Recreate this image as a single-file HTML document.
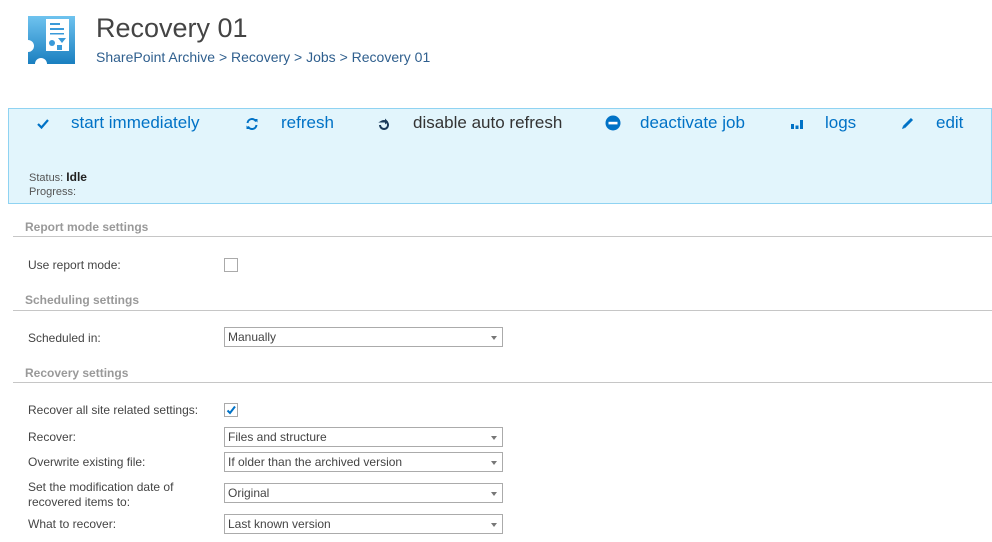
<!DOCTYPE html><html><head><style>
body{margin:0;width:992px;height:542px;background:#fff;font-family:"Liberation Sans",sans-serif;position:relative;overflow:hidden}
.a{position:absolute;white-space:nowrap}
.t{color:#0072c6;font-size:17px;line-height:20px}
.h{color:#999;font-size:12px;font-weight:bold;left:25px;line-height:14px}
.l{height:1px;background:#c6c6c6;left:13px;right:0}
.lb{color:#444;font-size:12px;left:28px;line-height:15px}
.s{left:224px;width:277px;height:18px;border:1px solid #ababab;font-size:12px;color:#444;line-height:18px;text-indent:3px}
.s:after{content:"";position:absolute;right:5px;top:8px;border-left:3.5px solid transparent;border-right:3.5px solid transparent;border-top:4px solid #777}
</style></head><body>
<svg class="a" style="left:26px;top:15px" width="50" height="50" viewBox="0 0 50 50">
<defs><linearGradient id="g" x1="0" y1="0" x2="0" y2="1"><stop offset="0" stop-color="#6fc3ef"/><stop offset="1" stop-color="#1a7fc0"/></linearGradient></defs>
<path d="M2 1H49V49H21A6 6 0 0 0 9 49H2V37A6 6 0 0 0 2 25Z" fill="url(#g)"/>
<rect x="20" y="4" width="23" height="32" fill="#fff"/>
<rect x="24" y="8" width="10" height="2" fill="#3a9ad9"/><rect x="24" y="13" width="14" height="2" fill="#3a9ad9"/><rect x="24" y="18" width="14" height="1.5" fill="#3a9ad9"/>
<circle cx="26" cy="28" r="3" fill="#3a9ad9"/><path d="M32 23H40L36 28Z" fill="#3a9ad9"/><rect x="31" y="30" width="5" height="5" fill="#3a9ad9"/>
</svg>
<div class="a" style="left:96px;top:12px;font-size:27px;color:#444;line-height:32px">Recovery 01</div>
<div class="a" style="left:96px;top:48px;font-size:14px;color:#2f5f8e;line-height:18px">SharePoint Archive &gt; Recovery &gt; Jobs &gt; Recovery 01</div>
<div class="a" style="left:8px;top:108px;width:982px;height:94px;background:#e2f5fc;border:1px solid #8fd3f2"></div>
<svg class="a" style="left:36px;top:117px" width="14" height="14" viewBox="0 0 14 14"><path d="M2 7L5.5 10.5L12 3" stroke="#0072c6" stroke-width="2.2" fill="none"/></svg>
<div class="a t" style="left:71px;top:113px">start immediately</div>
<svg class="a" style="left:245px;top:117px" width="14" height="14" viewBox="0 0 14 14"><path d="M2.5 6A4.5 4.5 0 0 1 11 4.5M11.5 8A4.5 4.5 0 0 1 3 9.5" stroke="#0072c6" stroke-width="2" fill="none"/><path d="M9 2H12.5V5.5ZM5 12H1.5V8.5Z" fill="#0072c6"/></svg>
<div class="a t" style="left:281px;top:113px">refresh</div>
<svg class="a" style="left:377px;top:117px" width="14" height="14" viewBox="0 0 14 14"><path d="M3 8A4 4 0 1 0 5 4.5H9" stroke="#1b3a5a" stroke-width="2" fill="none"/><path d="M8 1.5L11 4.5L8 7.5Z" fill="#1b3a5a"/></svg>
<div class="a t" style="left:413px;top:113px;color:#333">disable auto refresh</div>
<svg class="a" style="left:605px;top:115px" width="16" height="16" viewBox="0 0 16 16"><circle cx="8" cy="8" r="7.5" fill="#0072c6"/><rect x="3.5" y="6.8" width="9" height="2.6" fill="#fff"/></svg>
<div class="a t" style="left:640px;top:113px">deactivate job</div>
<svg class="a" style="left:790px;top:117px" width="14" height="14" viewBox="0 0 14 14"><rect x="1" y="7" width="3" height="5" fill="#0072c6"/><rect x="5.5" y="8.5" width="3" height="3.5" fill="#0072c6"/><rect x="10" y="3" width="3" height="9" fill="#0072c6"/></svg>
<div class="a t" style="left:825px;top:113px">logs</div>
<svg class="a" style="left:901px;top:116px" width="14" height="14" viewBox="0 0 14 14"><path d="M3 11L11 3" stroke="#0072c6" stroke-width="3"/><path d="M1 13L2 10L4 12Z" fill="#0072c6"/></svg>
<div class="a t" style="left:936px;top:113px">edit</div>
<div class="a" style="left:29px;top:170px;font-size:11px;color:#555;line-height:14px">Status: <b style="color:#222;font-size:12px">Idle</b><br>Progress:</div>
<div class="a h" style="top:220px">Report mode settings</div><div class="a l" style="top:236px"></div>
<div class="a lb" style="top:258px">Use report mode:</div>
<div class="a" style="left:224px;top:258px;width:12px;height:12px;border:1px solid #aaa"></div>
<div class="a h" style="top:293px">Scheduling settings</div><div class="a l" style="top:310px"></div>
<div class="a lb" style="top:331px">Scheduled in:</div>
<div class="a s" style="top:327px">Manually</div>
<div class="a h" style="top:366px">Recovery settings</div><div class="a l" style="top:382px"></div>
<div class="a lb" style="top:403px">Recover all site related settings:</div>
<div class="a" style="left:224px;top:403px;width:12px;height:12px;border:1px solid #aaa"><svg width="12" height="12" viewBox="0 0 12 12" style="display:block"><path d="M2.5 6.5L5 9L10 2.5" stroke="#0072c6" stroke-width="2" fill="none"/></svg></div>
<div class="a lb" style="top:430px">Recover:</div><div class="a s" style="top:427px">Files and structure</div>
<div class="a lb" style="top:455px">Overwrite existing file:</div><div class="a s" style="top:452px">If older than the archived version</div>
<div class="a lb" style="top:480px">Set the modification date of<br>recovered items to:</div><div class="a s" style="top:483px">Original</div>
<div class="a lb" style="top:517px">What to recover:</div><div class="a s" style="top:514px">Last known version</div>
</body></html>
